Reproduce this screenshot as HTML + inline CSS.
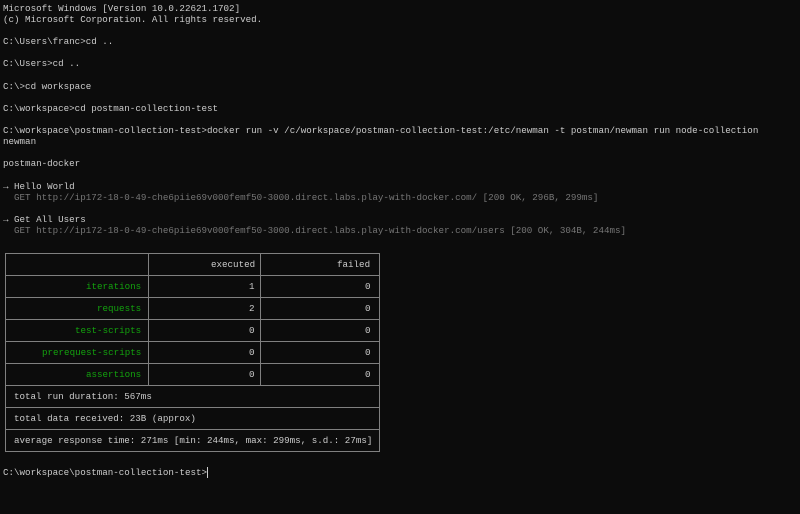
<!DOCTYPE html>
<html><head><meta charset="utf-8"><style>
body{margin:0;width:800px;height:514px;background:#0c0c0c;overflow:hidden;position:relative;font-family:"Liberation Mono",monospace;font-size:9.2px;color:#cccccc}
pre{margin:0;font:inherit;line-height:11.1px;position:absolute;left:3px;top:3px;white-space:pre}
.g{color:#767676}
.t{position:absolute;left:5px;top:253px;width:375px;height:199px;border:1px solid #808080;box-sizing:border-box}
.h{position:absolute;left:0;right:0;height:1px;background:#808080}
.v{position:absolute;width:1px;background:#808080;top:0;height:132px}
.c{position:absolute;line-height:11px;white-space:pre}
.gr{color:#13a10e}
</style></head><body>
<pre>Microsoft Windows [Version 10.0.22621.1702]
(c) Microsoft Corporation. All rights reserved.

C:\Users\franc>cd ..

C:\Users>cd ..

C:\>cd workspace

C:\workspace>cd postman-collection-test

C:\workspace\postman-collection-test>docker run -v /c/workspace/postman-collection-test:/etc/newman -t postman/newman run node-collection
newman

postman-docker

→ Hello World
<span class="g">  GET http://ip172-18-0-49-che6piie69v000femf50-3000.direct.labs.play-with-docker.com/ [200 OK, 296B, 299ms]</span>

→ Get All Users
<span class="g">  GET http://ip172-18-0-49-che6piie69v000femf50-3000.direct.labs.play-with-docker.com/users [200 OK, 304B, 244ms]</span></pre>
<div class="t">
<div class="h" style="top:21px"></div>
<div class="h" style="top:43px"></div>
<div class="h" style="top:65px"></div>
<div class="h" style="top:87px"></div>
<div class="h" style="top:109px"></div>
<div class="h" style="top:131px"></div>
<div class="h" style="top:153px"></div>
<div class="h" style="top:175px"></div>
<div class="v" style="left:142px"></div>
<div class="v" style="left:254px"></div>
<div class="c" style="right:234px;top:5px"> </div>
<div class="c" style="left:205px;top:5px">executed</div>
<div class="c" style="left:331px;top:5px">failed</div>
<div class="c gr" style="left:80px;top:27px">iterations</div>
<div class="c" style="left:243px;top:27px">1</div>
<div class="c" style="left:359px;top:27px">0</div>
<div class="c gr" style="left:91px;top:49px">requests</div>
<div class="c" style="left:243px;top:49px">2</div>
<div class="c" style="left:359px;top:49px">0</div>
<div class="c gr" style="left:69px;top:71px">test-scripts</div>
<div class="c" style="left:243px;top:71px">0</div>
<div class="c" style="left:359px;top:71px">0</div>
<div class="c gr" style="left:36px;top:93px">prerequest-scripts</div>
<div class="c" style="left:243px;top:93px">0</div>
<div class="c" style="left:359px;top:93px">0</div>
<div class="c gr" style="left:80px;top:115px">assertions</div>
<div class="c" style="left:243px;top:115px">0</div>
<div class="c" style="left:359px;top:115px">0</div>
<div class="c" style="left:8px;top:137px">total run duration: 567ms</div>
<div class="c" style="left:8px;top:159px">total data received: 23B (approx)</div>
<div class="c" style="left:8px;top:181px">average response time: 271ms [min: 244ms, max: 299ms, s.d.: 27ms]</div>
</div>
<div class="c" style="left:3px;top:467px">C:\workspace\postman-collection-test&gt;<span style="display:inline-block;width:1px;height:11px;background:#ccc;vertical-align:top"></span></div>
</body></html>
